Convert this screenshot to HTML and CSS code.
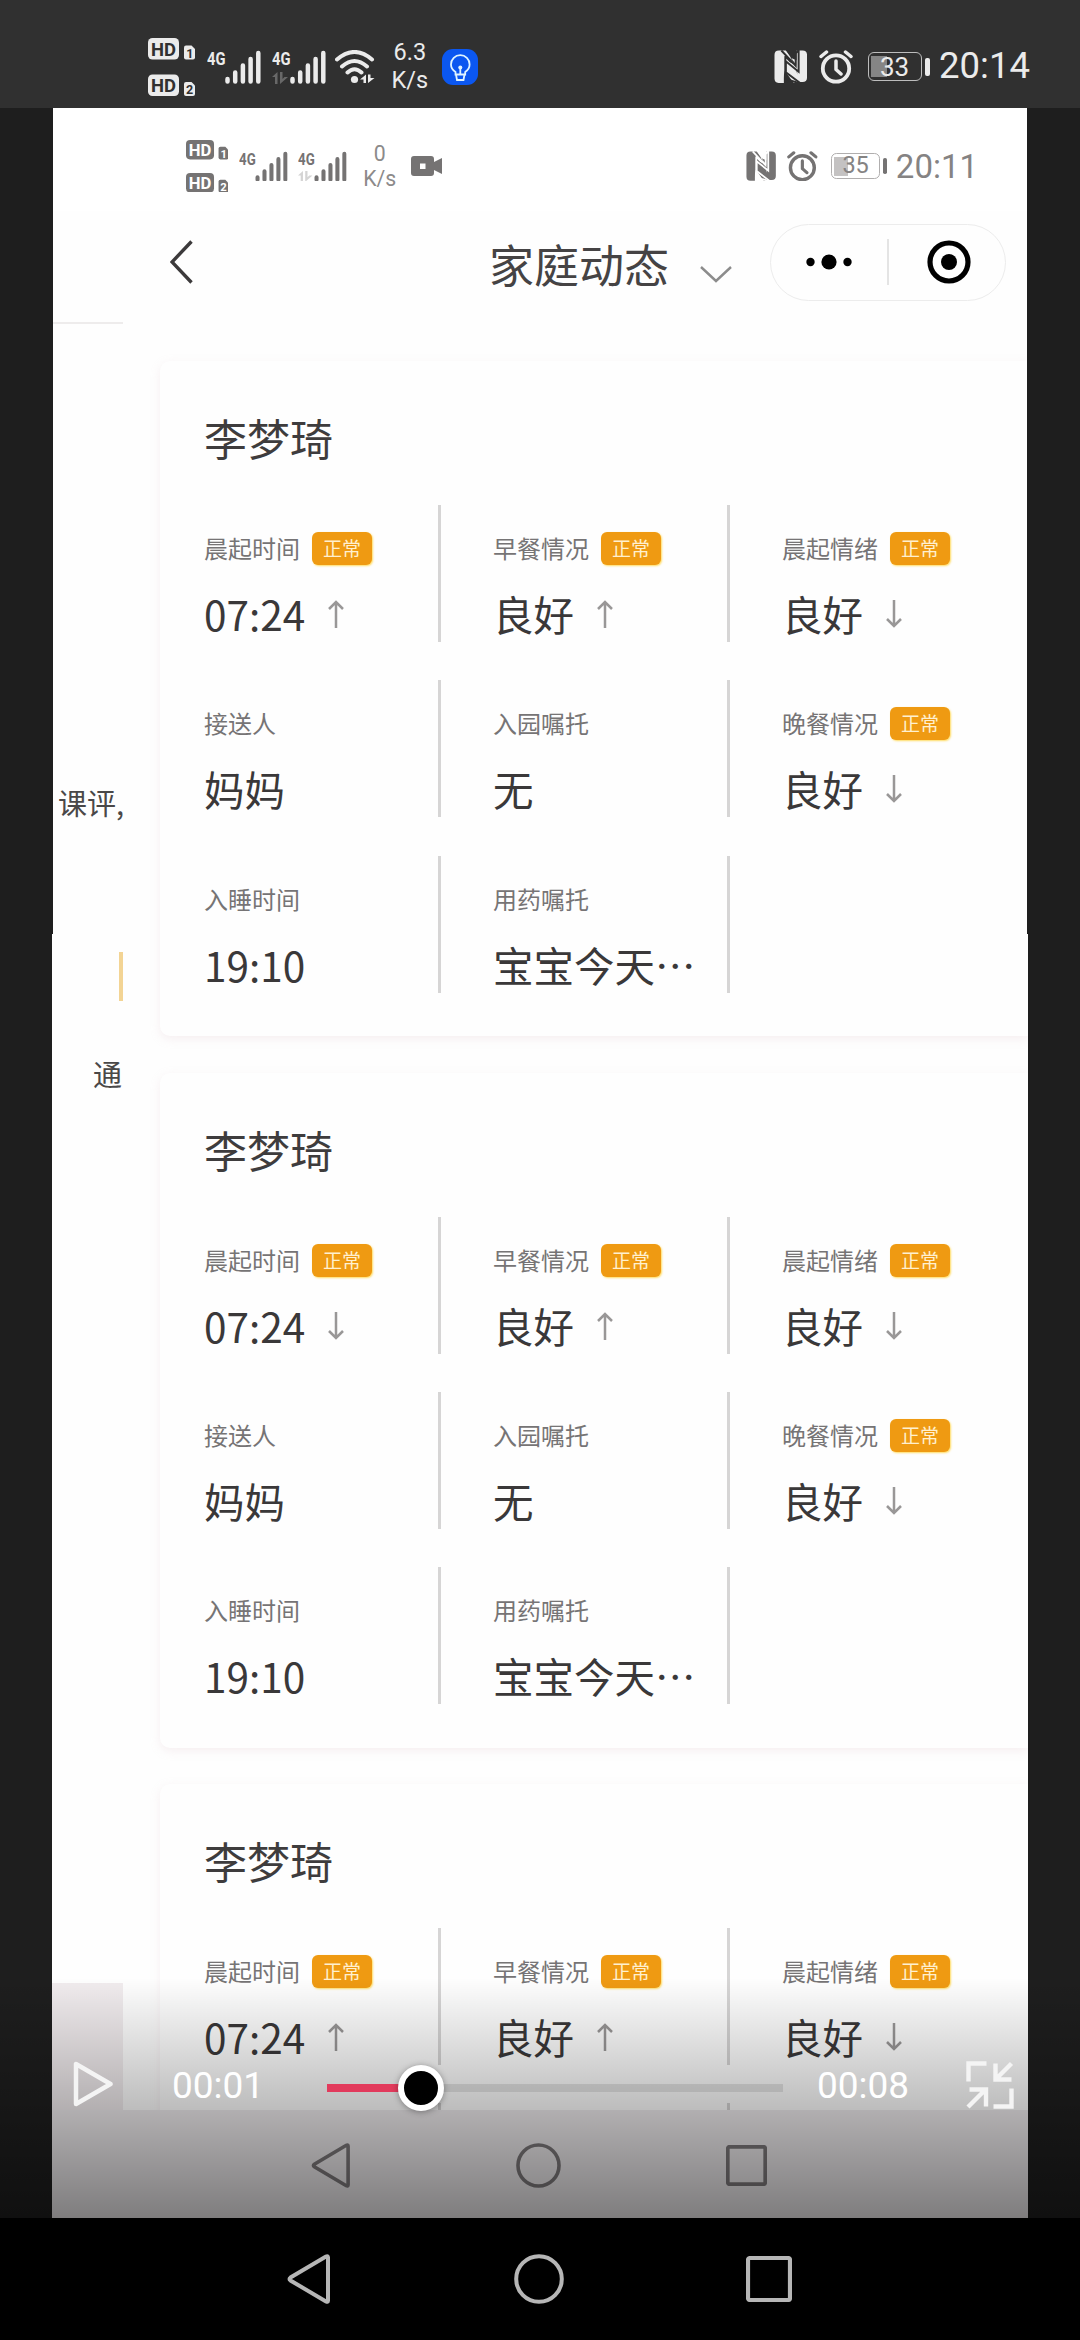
FILE: index.html
```html
<!DOCTYPE html>
<html lang="zh-CN">
<head>
  <meta charset="UTF-8">
  <meta name="viewport" content="width=device-width, initial-scale=1.0">
  <title>家庭动态</title>
  <link rel="stylesheet" href="styles.css">
</head>
<body>
  <svg class="sprite">
    <symbol id="hd" viewBox="0 0 47 58">
      <rect x="0" y="0" width="31" height="21.5" rx="4.5" fill="currentColor"/>
      <text class="cut" x="3" y="17.5" font-size="19" textLength="25" lengthAdjust="spacingAndGlyphs">HD</text>
      <path d="M36 9.5q0-2 2-2h5.500l3.500 3.500v8.500q0 2-2 2h-7q-2 0-2-2z" fill="currentColor"/>
      <text class="cut" x="38.200" y="19.500" font-size="12.500">1</text>
      <rect x="0" y="36.500" width="31" height="21.500" rx="4.500" fill="currentColor"/>
      <text class="cut" x="3" y="54" font-size="19" textLength="25" lengthAdjust="spacingAndGlyphs">HD</text>
      <path d="M36 46q0-2 2-2h5.500l3.500 3.500v8.500q0 2-2 2h-7q-2 0-2-2z" fill="currentColor"/>
      <text class="cut" x="38" y="56" font-size="12.500">2</text>
    </symbol>
    <symbol id="signal" viewBox="0 0 54 34">
      <text class="net" x="0" y="15" font-size="19" textLength="18.500" lengthAdjust="spacingAndGlyphs">4G</text>
      <path d="M20.500 29v2.500M28.200 22.500v9M35.900 15.500v16M43.600 9v22.500M51.300 3v28.500" stroke="currentColor" stroke-width="4.500" stroke-linecap="round"/>
    </symbol>
    <symbol id="updown" viewBox="0 0 16 12">
      <path d="M0 5l5.500-5v12h-2.500v-7zM8 0v12l8-7h-3.500l-2 2v-7z" fill="currentColor"/>
    </symbol>
    <symbol id="wifi" viewBox="0 0 40 34">
      <path d="M2 9.500Q19.500-5.500 37 9.500M7 16.500Q19.500 5.500 32 16.500M12.500 22.500Q19.500 16 26.500 22.500" fill="none" stroke="currentColor" stroke-width="4" stroke-linecap="round"/>
      <circle cx="19.500" cy="29.500" r="3.600" fill="currentColor"/>
      <path d="M25 29.500l6-5v8.500h-2.500v-3.500zM33 24.500v8.500l6.500-5h-4v-3.500z" fill="currentColor"/>
    </symbol>
    <symbol id="nfc" viewBox="0 0 34 34">
      <path d="M5 0.500h7L23 16v-5.500L16 7.500Q12 4 10 6v27.500H5q-4.500 0-4.500-4.500V5Q.5.500 5 .5z" fill="currentColor"/>
      <path d="M11 8v25.500h3Q10 30 11 22z" class="knock"/>
      <path d="M8 1h4l10 15 3 17.500H20L11 21 8 33.500z" fill="currentColor"/>
      <path d="M11 6L24 19M11.500 7v22.500L25 33.500" fill="none" class="knock-line"/>
      <path d="M12 11l11.500 9v4.500L14 17.500v7l10 8h5q4.500 0 4.500-4.500V5Q33.500.500 29 .5h-6v15" fill="currentColor"/>
      <path d="M7.500.500l14.500 15.500V3.500l3-3.500v22L12 11.500V22.500L26.500 33.500" fill="none" class="knock-line"/>
    </symbol>
    <symbol id="alarm" viewBox="0 0 34 34">
      <circle cx="17" cy="18.500" r="13.200" fill="none" stroke="currentColor" stroke-width="3.800"/>
      <path d="M17 11v8.500l5 4.500M2 6.500L7.500 2M32 6.500L26.500 2" fill="none" stroke="currentColor" stroke-width="3.500" stroke-linecap="round" stroke-linejoin="round"/>
    </symbol>
    <symbol id="up" viewBox="0 0 16 28">
      <path d="M8 28V2M1 9l7-7 7 7" fill="none" stroke="currentColor" stroke-width="2.500"/>
    </symbol>
    <symbol id="down" viewBox="0 0 16 28">
      <path d="M8 0v26M1 19l7 7 7-7" fill="none" stroke="currentColor" stroke-width="2.500"/>
    </symbol>
    <symbol id="nav-back" viewBox="0 0 44 50">
      <path d="M41 3.500v43q0 2-2 1L3.500 26.500q-2-1.500 0-3L39 2.500q2-1 2 1z" fill="none" stroke="currentColor" stroke-width="4"/>
    </symbol>
    <symbol id="nav-home" viewBox="0 0 50 50">
      <circle cx="25" cy="25" r="22.800" fill="none" stroke="currentColor" stroke-width="4"/>
    </symbol>
    <symbol id="nav-recent" viewBox="0 0 46 46">
      <rect x="2" y="2" width="42" height="42" rx="2" fill="none" stroke="currentColor" stroke-width="4.200"/>
    </symbol>
  </svg>

  <header class="status">
    <svg class="i-hd"><use href="#hd"/></svg>
    <svg class="i-signal"><use href="#signal"/></svg>
    <div class="data-signal">
      <svg class="i-signal"><use href="#signal"/></svg>
      <svg class="i-updown"><use href="#updown"/></svg>
    </div>
    <svg class="i-wifi"><use href="#wifi"/></svg>
    <div class="speed"><span>6.3</span><span>K/s</span></div>
    <svg class="i-bulb" viewBox="0 0 36 36">
      <rect width="36" height="36" rx="11" fill="#0b57f0"/>
      <path d="M13.500 25.500v-2.500Q9 20 9 15.500a9.300 9.300 0 0 1 18.600 0Q27.600 20 23.200 23v2.500zM14 25.500l1 5.500h6.500l1-5.500M18.300 25v-6" fill="none" stroke="#dff4ff" stroke-width="1.800"/>
      <circle cx="18.300" cy="18.500" r="2" fill="#dff4ff"/>
    </svg>
    <div class="status-right">
      <svg class="i-nfc"><use href="#nfc"/></svg>
      <svg class="i-alarm"><use href="#alarm"/></svg>
      <div class="battery"><span>33</span></div>
      <time>20:14</time>
    </div>
  </header>

  <main class="player">
    <div class="video">
      <header class="status recorded">
        <svg class="i-hd"><use href="#hd"/></svg>
        <svg class="i-signal"><use href="#signal"/></svg>
        <div class="data-signal">
          <svg class="i-signal"><use href="#signal"/></svg>
          <svg class="i-updown"><use href="#updown"/></svg>
        </div>
        <div class="speed"><span>0</span><span>K/s</span></div>
        <svg class="i-camera" viewBox="0 0 31 20">
          <path d="M3 0h17q3 0 3 3v3l8-4v16l-8-4v3q0 3-3 3H3q-3 0-3-3V3q0-3 3-3z" fill="currentColor"/>
          <rect x="9" y="7.500" width="5.500" height="5.500" fill="#fff"/>
        </svg>
        <div class="status-right">
          <svg class="i-nfc"><use href="#nfc"/></svg>
          <svg class="i-alarm"><use href="#alarm"/></svg>
          <div class="battery"><span>35</span></div>
          <time>20:11</time>
        </div>
      </header>

      <div class="app">
        <!-- previous page, still sliding out on the left -->
        <aside class="prev-page">
          <div class="prev-head"></div>
          <p class="prev-text">课评,</p>
          <div class="prev-mark"></div>
          <p class="prev-text second">通</p>
          <div class="prev-foot"></div>
        </aside>

        <section class="page">
          <div class="page-head">
            <svg class="back" viewBox="0 0 23 44"><path d="M21.500 1.500L2 22l19.500 20.500" fill="none" stroke="currentColor" stroke-width="3.400"/></svg>
            <h1>家庭动态</h1>
            <svg class="more" viewBox="0 0 32 17"><path d="M1 1l15 14L31 1" fill="none" stroke="#8c8c8c" stroke-width="2.400"/></svg>
            <div class="capsule">
              <svg class="dots" viewBox="0 0 46 16"><circle cx="4.500" cy="8" r="4.200"/><circle cx="23" cy="8" r="7.600"/><circle cx="41.500" cy="8" r="4.200"/></svg>
              <span class="capsule-line"></span>
              <svg class="target" viewBox="0 0 44 44"><circle cx="22" cy="22" r="19" fill="none" stroke="#000" stroke-width="5.200"/><circle cx="22" cy="22" r="8"/></svg>
            </div>
          </div>

          <div class="cards">
            <article class="card">
              <h2>李梦琦</h2>
              <div class="grid">
                <div class="cell"><div class="label">晨起时间<b>正常</b></div><div class="value">07:24<svg><use href="#up"/></svg></div></div>
                <div class="cell"><div class="label">早餐情况<b>正常</b></div><div class="value">良好<svg><use href="#up"/></svg></div></div>
                <div class="cell"><div class="label">晨起情绪<b>正常</b></div><div class="value">良好<svg><use href="#down"/></svg></div></div>
                <div class="cell"><div class="label">接送人</div><div class="value">妈妈</div></div>
                <div class="cell"><div class="label">入园嘱托</div><div class="value">无</div></div>
                <div class="cell"><div class="label">晚餐情况<b>正常</b></div><div class="value">良好<svg><use href="#down"/></svg></div></div>
                <div class="cell"><div class="label">入睡时间</div><div class="value">19:10</div></div>
                <div class="cell"><div class="label">用药嘱托</div><div class="value">宝宝今天…</div></div>
              </div>
            </article>

            <article class="card">
              <h2>李梦琦</h2>
              <div class="grid">
                <div class="cell"><div class="label">晨起时间<b>正常</b></div><div class="value">07:24<svg><use href="#down"/></svg></div></div>
                <div class="cell"><div class="label">早餐情况<b>正常</b></div><div class="value">良好<svg><use href="#up"/></svg></div></div>
                <div class="cell"><div class="label">晨起情绪<b>正常</b></div><div class="value">良好<svg><use href="#down"/></svg></div></div>
                <div class="cell"><div class="label">接送人</div><div class="value">妈妈</div></div>
                <div class="cell"><div class="label">入园嘱托</div><div class="value">无</div></div>
                <div class="cell"><div class="label">晚餐情况<b>正常</b></div><div class="value">良好<svg><use href="#down"/></svg></div></div>
                <div class="cell"><div class="label">入睡时间</div><div class="value">19:10</div></div>
                <div class="cell"><div class="label">用药嘱托</div><div class="value">宝宝今天…</div></div>
              </div>
            </article>

            <article class="card">
              <h2>李梦琦</h2>
              <div class="grid">
                <div class="cell"><div class="label">晨起时间<b>正常</b></div><div class="value">07:24<svg><use href="#up"/></svg></div></div>
                <div class="cell"><div class="label">早餐情况<b>正常</b></div><div class="value">良好<svg><use href="#up"/></svg></div></div>
                <div class="cell"><div class="label">晨起情绪<b>正常</b></div><div class="value">良好<svg><use href="#down"/></svg></div></div>
                <div class="cell"></div>
                <div class="cell"></div>
              </div>
            </article>
          </div>
        </section>
      </div>

      <nav class="navbar navbar-recorded">
        <svg class="nav-back"><use href="#nav-back"/></svg>
        <svg class="nav-home"><use href="#nav-home"/></svg>
        <svg class="nav-recent"><use href="#nav-recent"/></svg>
      </nav>
    </div>

    <div class="controls">
      <svg class="play" viewBox="0 0 40 46"><path d="M3 3v40l34.500-20z" fill="none" stroke="#f4f4f4" stroke-width="4.500" stroke-linejoin="round"/></svg>
      <span class="now">00:01</span>
      <div class="track"><div class="played"></div><div class="thumb"></div></div>
      <span class="total">00:08</span>
      <svg class="shrink" viewBox="0 0 48 48">
        <path d="M2.500 20.500V2.500h18M45.500 27.500v18h-18M29.500 2.500v16h16M29.500 18.500L45.500 2.500M2 46l16.500-16.500M3.500 28.500h16.500v17" fill="none" stroke="#f4f4f4" stroke-width="4.400"/>
      </svg>
    </div>
  </main>

  <nav class="navbar">
    <svg class="nav-back"><use href="#nav-back"/></svg>
    <svg class="nav-home"><use href="#nav-home"/></svg>
    <svg class="nav-recent"><use href="#nav-recent"/></svg>
  </nav>
</body>
</html>
```
FILE: styles.css
```css
* {
  box-sizing: border-box;
}
body {
  margin: 0;
  width: 1080px;
  height: 2340px;
  display: flex;
  flex-direction: column;
  background: #1e1e1e;
  font-family: 'Noto Sans CJK SC', 'Noto Sans', sans-serif;
  overflow: hidden;
}
svg {
  display: block;
  flex: none;
}
.sprite {
  position: absolute;
  width: 0;
  height: 0;
}

/* status bar, sized in em so the recorded one can be smaller */
.status {
  --bar: #303030;
  flex: none;
  display: flex;
  align-items: center;
  height: 108px;
  padding: 25px 50px 0 148px;
  font-family: Roboto, sans-serif;
  font-size: 10px;
  background: var(--bar);
  color: #ebebeb;
}
.cut {
  fill: var(--bar);
  font-family: Roboto, sans-serif;
  font-weight: 700;
}
.net {
  fill: currentColor;
  font-family: Roboto, sans-serif;
  font-weight: 700;
}
.knock {
  fill: var(--bar);
}
.knock-line {
  stroke: var(--bar);
  stroke-width: 2;
}
.i-hd {
  width: 4.7em;
  height: 5.8em;
  margin-right: 1.18em;
}
.i-signal {
  width: 5.4em;
  height: 3.4em;
}
.data-signal {
  position: relative;
  margin: 0 0.9em 0 1.15em;
}
.i-updown {
  position: absolute;
  left: 0;
  bottom: 0;
  width: 1.6em;
  height: 1.2em;
  opacity: 0.3;
}
.i-wifi {
  width: 4em;
  height: 3.4em;
}
.speed {
  width: 3.6em;
  margin-left: 1.65em;
  display: flex;
  flex-direction: column;
  align-items: center;
}
.speed span {
  font-size: 2.35em;
  line-height: 1.19;
}
.i-bulb {
  width: 3.6em;
  height: 3.6em;
  margin-left: 1.45em;
}
.status-right {
  margin-left: auto;
  display: flex;
  align-items: center;
}
.i-nfc {
  width: 3.35em;
  height: 3.35em;
}
.i-alarm {
  width: 3.4em;
  height: 3.4em;
  margin: 0 1.5em 0 1.15em;
}
.battery {
  position: relative;
  width: 5.4em;
  height: 2.9em;
  border: 0.18em solid #bdbdbd;
  border-radius: 0.6em;
  display: flex;
  align-items: center;
  justify-content: center;
  background: linear-gradient(#858585, #858585) 0.2em 50% / 1.6em 2.1em no-repeat;
}
.battery::after {
  content: '';
  position: absolute;
  right: -0.9em;
  width: 0.45em;
  height: 1.8em;
  border-radius: 0.2em;
  background: currentColor;
}
.battery span {
  font-size: 2.6em;
  line-height: 1;
}
.status time {
  margin-left: 0.48em;
  font-size: 3.65em;
  line-height: 1;
}
.recorded {
  --bar: #fff;
  height: 103px;
  padding: 13px 50px 0 134px;
  font-size: 9.04px;
  color: #757373;
}
.recorded .speed {
  margin-left: 0.9em;
  color: #8c8a8a;
}
.recorded time,
.recorded .battery span {
  color: #858383;
}
.recorded .battery {
  border-color: #b0aeae;
  background-image: linear-gradient(#c4c2c2, #c4c2c2);
}
.recorded .battery::after {
  background: #757373;
}
.i-camera {
  width: 31px;
  height: 20px;
  margin-left: 15px;
}

/* video */
.player {
  position: relative;
  flex: none;
  height: 2110px;
  padding: 0 52px;
}
.video {
  display: flex;
  flex-direction: column;
  height: 100%;
  overflow: hidden;
  background: #fefefe;
}
.video::before {
  content: '';
  position: absolute;
  left: 52px;
  right: 52px;
  top: 0;
  height: 826px;
  border: solid #1e1e1e;
  border-width: 0 1px;
}
.app {
  flex: 1;
  min-height: 0;
  display: flex;
  overflow: hidden;
}
.prev-page {
  flex: none;
  width: 71px;
  display: flex;
  flex-direction: column;
  overflow: hidden;
}
.prev-head {
  height: 113px;
  border-bottom: 2px solid #eeecec;
}
.prev-text {
  margin: 458px 0 0 6px;
  font-size: 29px;
  line-height: 40px;
  color: #4a4848;
  white-space: nowrap;
}
.prev-mark {
  align-self: flex-end;
  width: 4px;
  height: 49px;
  margin-top: 130px;
  background: #f3d494;
}
.prev-text.second {
  margin: 52px 0 0 41px;
}
.prev-foot {
  height: 127px;
  margin-top: auto;
  background: #f1ecee;
}

.page {
  flex: 1;
  min-width: 0;
}
.page-head {
  display: flex;
  align-items: center;
  height: 102px;
  padding: 0 22px 0 47px;
}
.back {
  width: 23px;
  height: 44px;
  color: #3c3a3b;
}
.page-head h1 {
  margin: 0 0 0 296px;
  padding-top: 4px;
  font-size: 45px;
  font-weight: 400;
  line-height: 60px;
  color: #454344;
}
.more {
  width: 32px;
  height: 17px;
  margin: 24px 0 0 31px;
}
.capsule {
  display: flex;
  align-items: center;
  width: 236px;
  height: 77px;
  margin-left: auto;
  padding: 0 34px 0 35px;
  border: 1.5px solid #ececec;
  border-radius: 39px;
}
.dots {
  width: 46px;
  height: 16px;
}
.capsule-line {
  width: 1.5px;
  height: 46px;
  margin-left: 35px;
  background: #e4e4e4;
}
.target {
  width: 44px;
  height: 44px;
  margin-left: auto;
}

.cards {
  padding: 48px 0 0 37px;
}
.card {
  height: 675px;
  margin-bottom: 36.5px;
  padding: 46px 0 0 44px;
  background: #fefefe;
  border-radius: 10px 0 0 10px;
  box-shadow: 0 3px 10px rgba(225, 195, 205, 0.25);
}
.card h2 {
  margin: 0 0 38px;
  font-size: 43px;
  font-weight: 400;
  line-height: 60px;
  color: #3e3c3d;
}
.grid {
  display: grid;
  grid-template-columns: 289px 289px 1fr;
  grid-auto-rows: 137px;
  row-gap: 38.4px;
  margin-left: -52px;
}
.cell {
  padding: 24px 0 0 52px;
}
.cell:not(:nth-child(3n)) {
  border-right: 3px solid #d6d5d5;
}
.label {
  display: flex;
  align-items: center;
  height: 38px;
  font-size: 24px;
  line-height: 36px;
  color: #767475;
}
.label b {
  width: 60px;
  height: 33px;
  margin: 1px 0 0 12px;
  border-radius: 6px;
  background: #ef9a12;
  box-shadow: 1px 1px 2px rgba(255, 215, 80, 0.9);
  font-size: 19px;
  font-weight: 400;
  line-height: 32px;
  text-align: center;
  color: #fff0cf;
}
.value {
  display: flex;
  align-items: center;
  margin-top: 17px;
  font-size: 40.5px;
  line-height: 60px;
  color: #3a3839;
  white-space: nowrap;
}
.value svg {
  width: 16px;
  height: 28px;
  margin-left: 23px;
  color: #999797;
}

/* android navigation */
.navbar {
  flex: 1;
  position: relative;
  display: flex;
  align-items: center;
  padding: 0 288px 0 287px;
  justify-content: space-between;
  background: #000;
  color: #b6b6b6;
}
.nav-back {
  width: 44px;
  height: 50px;
}
.nav-home {
  width: 50px;
  height: 50px;
}
.nav-recent {
  width: 46px;
  height: 46px;
}
.navbar-recorded {
  flex: none;
  height: 108px;
  padding: 2px 261px 0 259px;
  background: #efecee;
  color: #7d797b;
}
.navbar-recorded .nav-back {
  width: 40px;
  height: 45px;
}
.navbar-recorded .nav-home {
  width: 45px;
  height: 45px;
}
.navbar-recorded .nav-recent {
  width: 41px;
  height: 41px;
}

/* player controls lie over the video */
.controls {
  position: absolute;
  left: 0;
  right: 0;
  bottom: 0;
  height: 240px;
  display: flex;
  align-items: flex-start;
  padding: 83px 66px 0 73px;
  background: linear-gradient(rgba(0, 0, 0, 0), rgba(0, 0, 0, 0.47));
  font-family: Roboto, sans-serif;
  font-size: 37px;
  line-height: 50px;
  color: #fff;
}
.play {
  width: 40px;
  height: 46px;
}
.now {
  width: 95px;
  margin-left: 59px;
}
.track {
  position: relative;
  width: 456px;
  height: 8px;
  margin: 23px 0 0 60px;
  background: rgba(130, 130, 130, 0.28);
}
.played {
  width: 94px;
  height: 8px;
  background: #e23a5c;
}
.thumb {
  position: absolute;
  left: 71px;
  top: -19px;
  width: 46px;
  height: 46px;
  border: 6px solid #fff;
  border-radius: 50%;
  background: #000;
  box-shadow: 0 1px 6px rgba(0, 0, 0, 0.35);
}
.total {
  margin-left: 34px;
}
.shrink {
  width: 48px;
  height: 48px;
  margin-left: auto;
}
```
